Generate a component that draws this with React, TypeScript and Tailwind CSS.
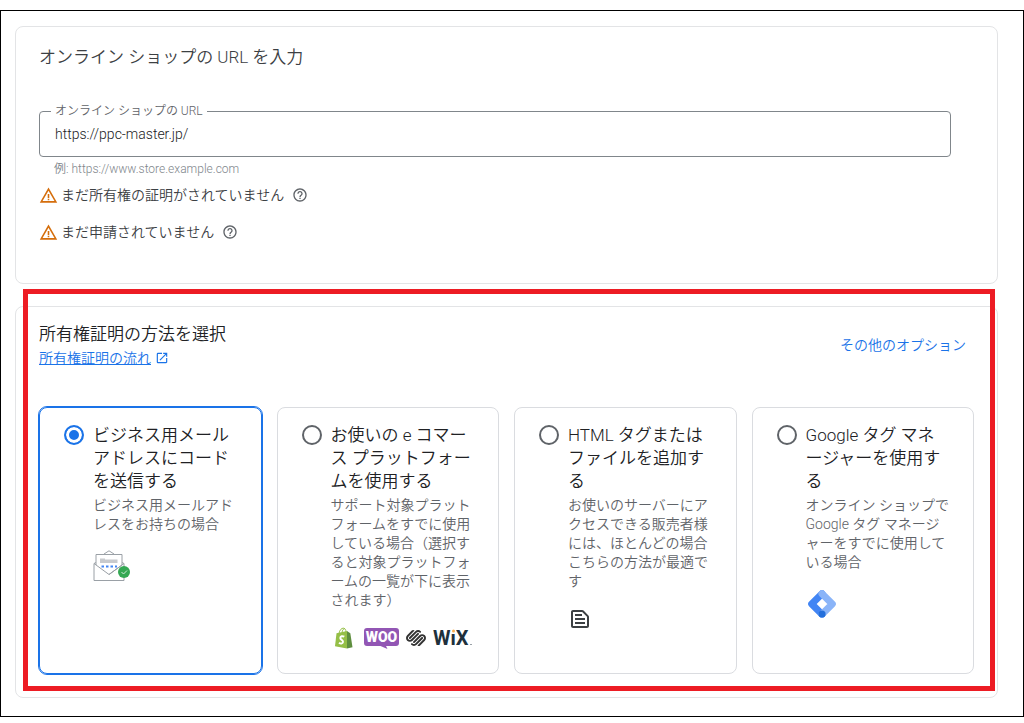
import type { ReactNode } from "react";
import { useState } from "react";
import { MdHelpOutline, MdOpenInNew, MdOutlineTextSnippet, MdWarningAmber } from "react-icons/md";
import { SiSquarespace } from "react-icons/si";

function EmailIcon() {
  return (
    <svg width="38" height="32" viewBox="0 0 38 32" fill="none" aria-hidden="true">
      <path d="M3 12.5L1 13.5V30.5H31V13.5L29 12.5" stroke="#9aa0a6" />
      <path d="M11 4L16 .8L21 4" stroke="#9aa0a6" />
      <path d="M3 15V4.500H29V15L16 24.500L1 13.500M16 24.500L31 13.500" stroke="#9aa0a6" fill="#fff" />
      <path d="M7 8.500H12V9.500H24.500V13H7Z" fill="#c8cacd" />
      <path d="M8.500 16.500H24" stroke="#4285f4" strokeWidth="2" strokeDasharray="2.500 2" />
      <circle cx="31" cy="22" r="6" fill="#34a853" />
      <path d="M28.500 22L30.500 24L34 20.500" stroke="#ceead6" />
    </svg>
  );
}

function ShopifyIcon() {
  return (
    <svg width="20" height="22" viewBox="0 0 20 22" aria-hidden="true">
      <path d="M2.500 6.300L13 4V21.500L1 19.300Z" fill="#95bf47" />
      <path d="M13 4L16.300 6.300L18.500 20.200L13 21.500Z" fill="#5e8e3e" />
      <path d="M5 6.500C5.500 3 7.600 1 9.500 1.200C11.300 1.300 12 3 12 5M8 5.500C8.300 3 9.500 1.500 11 1.700" stroke="#95bf47" fill="none" />
      <path d="M10.300 9.700C8.500 8.800 6.300 9.200 6.300 11C6.300 13 9.300 12.800 9 15C8.800 16.800 6.500 16.800 5 15.700" stroke="#fff" strokeWidth="2" fill="none" />
    </svg>
  );
}

function WooLogo() {
  return (
    <svg width="36" height="22" viewBox="0 0 36 22" role="img" aria-label="Woo">
      <path d="M3 1H32Q35 1 35 4V16Q35 19 32 19H22L23.500 22L16.500 19H3Q0 19 0 16V4Q0 1 3 1Z" fill="#9256b4" />
      <text x="17.500" y="15" textAnchor="middle" fontFamily="Roboto, sans-serif" fontWeight="900" fontSize="14" fill="#fff">
        WOO
      </text>
    </svg>
  );
}

function WixLogo() {
  return (
    <svg width="42" height="24" viewBox="0 0 42 24" role="img" aria-label="Wix">
      <text x="0" y="19" fontFamily="Roboto, sans-serif" fontWeight="700" fontSize="20" fill="#20303c">
        WiX
      </text>
      <rect x="18" y="3" width="5" height="4" fill="#fff" />
      <circle cx="20.500" cy="5" r="1.500" fill="#faad4d" />
      <circle cx="38" cy="18.500" r=".6" fill="#20303c" />
    </svg>
  );
}

function TagManagerIcon() {
  return (
    <svg width="28" height="28" viewBox="0 0 28 28" fill="none" strokeWidth="7" strokeLinecap="round" strokeLinejoin="round" className="mt-[18px] ml-0.5" aria-hidden="true">
      <path d="M14 3.700L3.700 14L14 24.300" stroke="#4285f4" />
      <path d="M14 3.700L24.300 14L14 24.300" stroke="#8ab4f8" />
      <circle cx="14" cy="24" r="3.600" fill="#246fdb" stroke="none" />
    </svg>
  );
}

type Method = { id: string; title: string; description: string; icon: ReactNode };

const methods: Method[] = [
  {
    id: "email",
    title: "ビジネス用メール\nアドレスにコード\nを送信する",
    description: "ビジネス用メールアド\nレスをお持ちの場合",
    icon: <EmailIcon />,
  },
  {
    id: "platform",
    title: "お使いの e コマー\nス プラットフォー\nムを使用する",
    description: "サポート対象プラット\nフォームをすでに使用\nしている場合（選択す\nると対象プラットフォ\nームの一覧が下に表示\nされます）",
    icon: (
      <div className="flex items-center pl-[3px]">
        <ShopifyIcon />
        <div className="ml-[10px]">
          <WooLogo />
        </div>
        <SiSquarespace size={20} className="ml-[6px] text-[#333]" />
        <div className="ml-[7px]">
          <WixLogo />
        </div>
      </div>
    ),
  },
  {
    id: "html",
    title: "HTML タグまたは\nファイルを追加す\nる",
    description: "お使いのサーバーにア\nクセスできる販売者様\nには、ほとんどの場合\nこちらの方法が最適で\nす",
    icon: <MdOutlineTextSnippet size={24} className="text-[#3c4043]" />,
  },
  {
    id: "gtm",
    title: "Google タグ マネ\nージャーを使用す\nる",
    description: "オンライン ショップで\nGoogle タグ マネージ\nャーをすでに使用して\nいる場合",
    icon: <TagManagerIcon />,
  },
];

function Warning({ children }: { children: ReactNode }) {
  return (
    <div className="flex items-center h-5 text-sm text-[#3c4043]">
      <MdWarningAmber size={19} className="shrink-0 mr-[3px] text-[#d56e0c]" />
      <span>{children}</span>
      <button type="button" aria-label="ヘルプ" className="ml-2 text-[#5f6368]">
        <MdHelpOutline size={16} />
      </button>
    </div>
  );
}

function MethodCard({ method, checked, onSelect }: { method: Method; checked: boolean; onSelect: () => void }) {
  return (
    <label
      className={`flex items-start gap-[9px] min-h-[267px] rounded-lg border pl-6 pt-4 ${
        checked ? "border-[#1a73e8] outline outline-[#1a73e8]" : "border-[#dadce0]"
      }`}
    >
      <input
        type="radio"
        name="method"
        value={method.id}
        checked={checked}
        onChange={onSelect}
        className="appearance-none shrink-0 size-5 mt-px rounded-full border-2 border-[#5f6368] checked:border-[#1a73e8] checked:bg-[#1a73e8] checked:shadow-[inset_0_0_0_3px_white]"
      />
      <span className="block whitespace-pre">
        <span className="block text-[17px] leading-[23px] text-[#202124]">{method.title}</span>
        <span className="block mt-[3px] text-sm leading-[19px] text-[#5f6368]">{method.description}</span>
        <span className="block mt-4">{method.icon}</span>
      </span>
    </label>
  );
}

export default function App() {
  const [url, setUrl] = useState("https://ppc-master.jp/");
  const [selected, setSelected] = useState("email");

  return (
    <div lang="ja" className="bg-white pt-[10px] pb-[6px] font-[350] font-[Roboto,'Noto_Sans_CJK_JP',sans-serif]">
      <main className="border border-black pt-[15px] pb-[18px] pl-[14px] pr-[25px]">
        <section className="rounded-lg border border-[#e3e4e6] pt-[18px] pb-[41px] pl-[23px] pr-[46px]">
          <h2 className="text-[17px] leading-6 text-[#3c4043] font-[350]">オンライン ショップの URL を入力</h2>
          <fieldset className="mt-[34px] rounded-[4px] border border-[#80868b] pl-[11px] pr-3 pb-[10px]">
            <legend className="px-1 text-xs leading-4 text-[#5f6368]">
              <label htmlFor="shop-url">オンライン ショップの URL</label>
            </legend>
            <input
              id="shop-url"
              type="text"
              value={url}
              onChange={(e) => setUrl(e.target.value)}
              className="block w-full h-6 mt-[3px] px-1 text-sm text-[#202124] outline-none"
            />
          </fieldset>
          <p className="mt-1 ml-[15px] text-xs leading-4 text-[#80868b]">例: https://www.store.example.com</p>
          <div className="mt-2 flex flex-col gap-[17px]">
            <Warning>まだ所有権の証明がされていません</Warning>
            <Warning>まだ申請されていません</Warning>
          </div>
        </section>

        <section className="relative mt-[22px] rounded-lg border border-[#e3e4e6] pt-[15px] pb-[23px] px-[23px]">
          <div className="flex items-center justify-between pr-2">
            <div>
              <h2 className="text-[17px] leading-6 text-[#202124] font-[350]">所有権証明の方法を選択</h2>
              <a href="#flow" className="mt-[2px] flex items-center gap-1 text-sm leading-5 text-[#1a73e8]">
                <span className="underline">所有権証明の流れ</span>
                <MdOpenInNew size={14} />
              </a>
            </div>
            <a href="#options" className="text-sm text-[#1a73e8]">その他のオプション</a>
          </div>

          <div className="mt-[39px] grid grid-cols-4 gap-[15px]">
            {methods.map((method) => (
              <MethodCard
                key={method.id}
                method={method}
                checked={method.id === selected}
                onSelect={() => setSelected(method.id)}
              />
            ))}
          </div>

          {/* highlight frame over the verification section */}
          <div className="pointer-events-none absolute -top-[18px] bottom-[6px] left-[7px] right-[2px] border-[5px] border-[#ed1c24]" />
        </section>
      </main>
    </div>
  );
}
